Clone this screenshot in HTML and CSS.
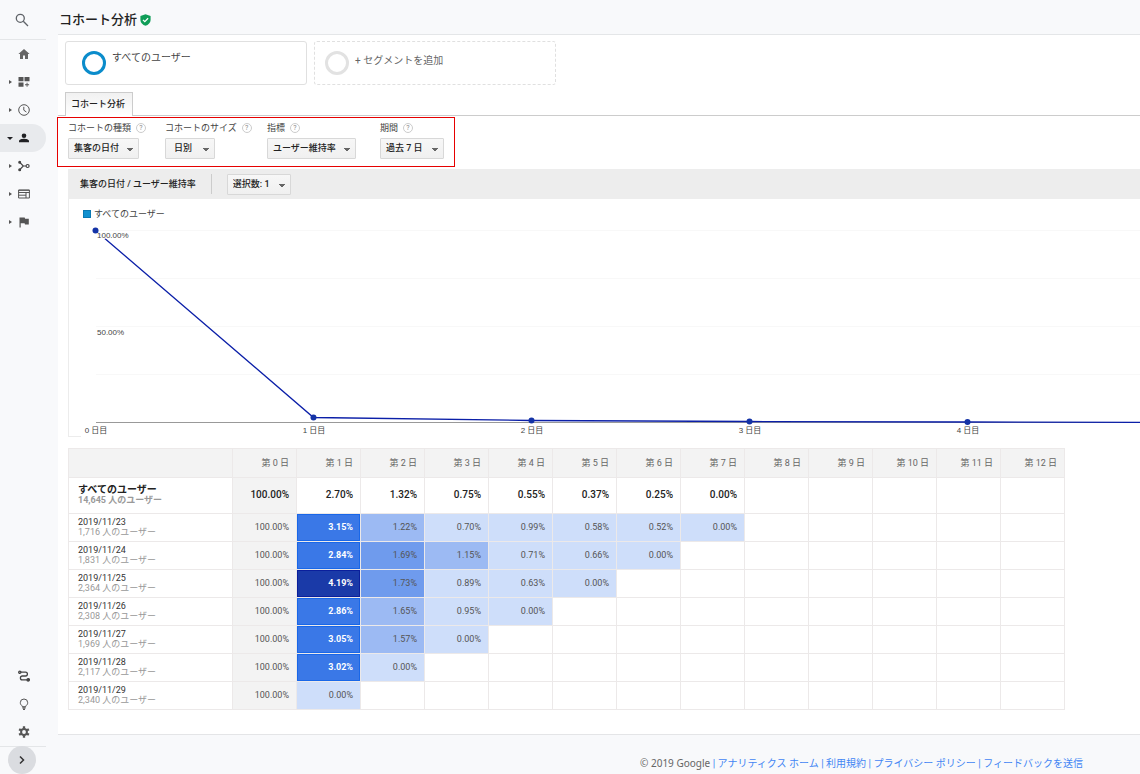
FILE: index.html
```html
<!DOCTYPE html>
<html lang="ja">
<head>
<meta charset="utf-8">
<title>コホート分析</title>
<link rel="stylesheet" href="styles.css">
</head>
<body>
<aside class="sidebar">
  <div class="side-search">
    <button class="icon-button" aria-label="検索"><svg width="14" height="14" viewBox="0 0 14 14" fill="none" stroke="#5f6368" stroke-width="1.3"><circle cx="5.3" cy="5.3" r="4"/><path d="M8.3 8.3 13 13"/></svg></button>
  </div>
  <nav class="side-nav">
    <a class="side-item" href="#" aria-label="ホーム"><svg class="icon" viewBox="0 0 12 12" fill="#666"><path d="M6 1 0.4 6H2v5h3V7.5h2V11h3V6h1.6z"/></svg></a>
    <a class="side-item has-caret" href="#" aria-label="カスタマイズ"><svg class="icon" viewBox="0 0 12 12" fill="#555"><path d="M.5 1h5v4.3h-5zM6.500 1h5v4.300h-5zM.5 6.500h5v4.300h-5zM8.600 6.700h.9v1.600h1.600v.9H9.500v1.600h-.9V9.200H7v-.9h1.600z"/></svg></a>
    <a class="side-item has-caret" href="#" aria-label="リアルタイム"><svg class="icon" viewBox="0 0 12 12" fill="none" stroke="#555"><circle cx="6" cy="6" r="5.3"/><path d="M5.800 2.800v3.400l2.600 1.800"/></svg></a>
    <a class="side-item has-caret active" href="#" aria-label="ユーザー"><svg class="icon" viewBox="0 0 12 12" fill="#202124"><circle cx="6" cy="3.700" r="2.300"/><path d="M1 10.300V9.200C1 7.500 4 6.800 6 6.800s5 .7 5 2.400v1.100z"/></svg></a>
    <a class="side-item has-caret" href="#" aria-label="集客"><svg class="icon" viewBox="0 0 12 12" fill="none" stroke="#444" stroke-width="1.200"><path d="M1.800 2.300 5.300 6 1.800 9.700M5.300 6H8"/><circle cx="9.600" cy="6" r="1.500"/><circle cx="1.700" cy="2.200" r=".9" fill="#444"/><circle cx="1.700" cy="9.800" r=".9" fill="#444"/></svg></a>
    <a class="side-item has-caret" href="#" aria-label="行動"><svg class="icon" viewBox="0 0 12 12" fill="none" stroke="#555"><path d="M.6 2h10.800v8H.6zM.6 4.500h10.800M8 4.500V10M.6 7.200H8"/><path d="M.6 2.300h10.800"/></svg></a>
    <a class="side-item has-caret" href="#" aria-label="コンバージョン"><svg class="icon" viewBox="0 0 12 12" fill="#555"><path d="M1.500 1.500h5.200l.4 1.300h3.700v5.700H7L6.600 7.200H2.700v4.300H1.500z"/></svg></a>
  </nav>
  <nav class="side-nav side-tools">
    <a class="side-item" href="#" aria-label="アトリビューション"><svg class="icon" viewBox="0 0 12 12" fill="none" stroke="#444" stroke-width="1.300"><circle cx="1.800" cy="2.200" r="1.100"/><path d="M3 2.200h4.500a1.900 1.900 0 0 1 0 3.800H4.300a1.900 1.900 0 0 0 0 3.800H9"/><circle cx="10.200" cy="9.800" r="1.200" fill="#444"/></svg></a>
    <a class="side-item" href="#" aria-label="発見"><svg class="icon" viewBox="0 0 12 12" fill="none" stroke="#555"><path d="M4.300 8.700V7.900C3 7.200 2.300 6.100 2.300 4.700a3.700 3.700 0 0 1 7.400 0c0 1.400-.7 2.500-2 3.200v.8z"/><path d="M4.300 9.800h3.400M5 11.300h2" stroke-width="1.200"/></svg></a>
    <a class="side-item" href="#" aria-label="管理"><svg class="icon" viewBox="0 0 12 12" fill="none" stroke="#555"><circle cx="6" cy="6" r="2.900" stroke-width="2"/><path d="M6 .3v2.200M6 9.500v2.200M1.100 3.200 3 4.300M9 7.700l1.900 1.100M1.100 8.800 3 7.700M9 4.300l1.900-1.100" stroke-width="2.300"/></svg></a>
  </nav>
  <div class="side-foot">
    <button class="expand" aria-label="メニューを開く"><svg width="10" height="10" viewBox="0 0 10 10" fill="none" stroke="#333" stroke-width="1.500"><path d="m3 1.500 3.500 3.500L3 8.500"/></svg></button>
  </div>
</aside>

<div class="page">
  <header class="page-header">
    <h1>コホート分析</h1>
    <svg width="11" height="12" viewBox="0 0 11 12"><path d="M5.500.2 10.600 2v4c0 2.700-2.300 4.900-5.100 5.800C2.700 10.900.4 8.700.4 6V2z" fill="#0f9d58"/><path d="m3 5.900 1.800 1.700 3.300-3.300" fill="none" stroke="#fff" stroke-width="1.300"/></svg>
  </header>

  <main class="content">
    <div class="segments">
      <button class="segment"><span class="ring"></span><span>すべてのユーザー</span></button>
      <button class="segment segment-add"><span class="ring"></span><span>+ セグメントを追加</span></button>
    </div>

    <div class="tabs"><button class="tab">コホート分析</button></div>

    <form class="controls">
      <div class="control">
        <label for="type">コホートの種類 <span class="help">?</span></label>
        <select id="type" class="pick pick-type"><option>集客の日付</option></select>
      </div>
      <div class="control">
        <label for="size">コホートのサイズ <span class="help">?</span></label>
        <select id="size" class="pick pick-size"><option>日別</option></select>
      </div>
      <div class="control">
        <label for="metric">指標 <span class="help">?</span></label>
        <select id="metric" class="pick pick-metric"><option>ユーザー維持率</option></select>
      </div>
      <div class="control">
        <label for="range">期間 <span class="help">?</span></label>
        <select id="range" class="pick pick-range"><option>過去 7 日</option></select>
      </div>
    </form>

    <section class="panel">
      <div class="panel-head">
        <h2>集客の日付 / ユーザー維持率</h2>
        <select class="pick pick-count" aria-label="選択数"><option>選択数: 1</option></select>
      </div>
      <div class="chart">
        <div class="legend"><span class="swatch"></span>すべてのユーザー</div>
        <svg class="plot" height="211">
          <g stroke="#f8f8f8"><path d="M27 4.500h3000M27 52.500h3000M27 100.500h3000M27 148.500h3000"/></g>
          <path d="M0 210.500h12" stroke="#ececec"/>
          <path d="M27 196.500h3000" stroke="#999"/>
          <path d="M26.500 4.500 244.500 191.500 462.500 194.500 680.500 195.500 898.500 196 1116.500 196.500" fill="none" stroke="#0b1fa8" stroke-width="1.300"/>
          <g fill="#1433a6"><circle cx="244.500" cy="191.500" r="3"/><circle cx="462.500" cy="194.500" r="3"/><circle cx="680.500" cy="195.500" r="3"/><circle cx="898.500" cy="196" r="3"/></g>
          <g class="y-label"><text x="28" y="12">100.00%</text><text x="28" y="109">50.00%</text></g>
          <circle cx="26.500" cy="4.500" r="3" fill="#1433a6"/>
          <g class="x-label"><text x="27" y="207">0 日目</text><text x="245" y="207">1 日目</text><text x="463" y="207">2 日目</text><text x="681" y="207">3 日目</text><text x="899" y="207">4 日目</text></g>
        </svg>
      </div>
    </section>

    <table class="cohort">
      <colgroup><col class="col-name"><col span="13"></colgroup>
      <thead><tr><th></th><th>第 0 日</th><th>第 1 日</th><th>第 2 日</th><th>第 3 日</th><th>第 4 日</th><th>第 5 日</th><th>第 6 日</th><th>第 7 日</th><th>第 8 日</th><th>第 9 日</th><th>第 10 日</th><th>第 11 日</th><th>第 12 日</th></tr></thead>
      <tbody>
        <tr class="total"><th>すべてのユーザー<small>14,645 人のユーザー</small></th><td class="base">100.00%</td><td>2.70%</td><td>1.32%</td><td>0.75%</td><td>0.55%</td><td>0.37%</td><td>0.25%</td><td>0.00%</td><td></td><td></td><td></td><td></td><td></td></tr>
        <tr><th>2019/11/23<small>1,716 人のユーザー</small></th><td class="base">100.00%</td><td class="l4">3.15%</td><td class="l2">1.22%</td><td class="l1">0.70%</td><td class="l1">0.99%</td><td class="l1">0.58%</td><td class="l1">0.52%</td><td class="l1">0.00%</td><td></td><td></td><td></td><td></td><td></td></tr>
        <tr><th>2019/11/24<small>1,831 人のユーザー</small></th><td class="base">100.00%</td><td class="l4">2.84%</td><td class="l3">1.69%</td><td class="l2">1.15%</td><td class="l1">0.71%</td><td class="l1">0.66%</td><td class="l1">0.00%</td><td></td><td></td><td></td><td></td><td></td><td></td></tr>
        <tr><th>2019/11/25<small>2,364 人のユーザー</small></th><td class="base">100.00%</td><td class="l5">4.19%</td><td class="l3">1.73%</td><td class="l1">0.89%</td><td class="l1">0.63%</td><td class="l1">0.00%</td><td></td><td></td><td></td><td></td><td></td><td></td><td></td></tr>
        <tr><th>2019/11/26<small>2,308 人のユーザー</small></th><td class="base">100.00%</td><td class="l4">2.86%</td><td class="l2">1.65%</td><td class="l1">0.95%</td><td class="l1">0.00%</td><td></td><td></td><td></td><td></td><td></td><td></td><td></td><td></td></tr>
        <tr><th>2019/11/27<small>1,969 人のユーザー</small></th><td class="base">100.00%</td><td class="l4">3.05%</td><td class="l2">1.57%</td><td class="l1">0.00%</td><td></td><td></td><td></td><td></td><td></td><td></td><td></td><td></td><td></td></tr>
        <tr><th>2019/11/28<small>2,117 人のユーザー</small></th><td class="base">100.00%</td><td class="l4">3.02%</td><td class="l1">0.00%</td><td></td><td></td><td></td><td></td><td></td><td></td><td></td><td></td><td></td><td></td></tr>
        <tr><th>2019/11/29<small>2,340 人のユーザー</small></th><td class="base">100.00%</td><td class="l1">0.00%</td><td></td><td></td><td></td><td></td><td></td><td></td><td></td><td></td><td></td><td></td><td></td></tr>
      </tbody>
    </table>
  </main>

  <footer class="page-footer">
    <span>© 2019 Google</span> | <a href="#">アナリティクス ホーム</a> | <a href="#">利用規約</a> | <a href="#">プライバシー ポリシー</a> | <a href="#">フィードバックを送信</a>
  </footer>
</div>
</body>
</html>
```
FILE: styles.css
```css
* { box-sizing: border-box; }

body {
  display: flex;
  min-height: 100vh;
  margin: 0;
  background: #f8f9fb;
  color: #222;
  font: 9px/12px Roboto, "Noto Sans CJK JP", sans-serif;
}

button, select { font: inherit; color: inherit; }
a { text-decoration: none; }

/* Sidebar */
.sidebar {
  display: flex;
  flex-direction: column;
  flex: none;
  width: 58px;
  height: 100vh;
  padding-right: 12px;
}
.side-search {
  display: flex;
  align-items: center;
  height: 40px;
  padding-left: 15px;
  border-bottom: 1px solid #e4e6e8;
}
.icon-button { display: flex; padding: 0; border: 0; background: none; }
.side-item {
  display: flex;
  align-items: center;
  height: 28px;
  padding-left: 18px;
}
.icon { width: 12px; height: 12px; }
.has-caret { padding-left: 9px; gap: 6px; }
.has-caret::before {
  content: "";
  border: solid transparent;
  border-width: 2px 0 2px 3px;
  border-left-color: #555;
}
.side-item.active { padding-left: 7px; gap: 5px; border-radius: 0 14px 14px 0; background: #e8eaed; }
.side-item.active::before {
  border-width: 3px 3px 0;
  border-color: #202124 transparent transparent;
}
.side-tools { margin-top: auto; }
.side-foot { height: 28px; padding-left: 8px; box-shadow: inset 0 1px #e4e6e8; }
.expand {
  display: flex;
  align-items: center;
  justify-content: center;
  width: 28px;
  height: 28px;
  padding: 0;
  border: 0;
  border-radius: 50%;
  background: #dadce0;
}

/* Page frame */
.page { display: flex; flex-direction: column; flex: 1; min-width: 0; }
.page-header {
  display: flex;
  align-items: center;
  gap: 3px;
  height: 35px;
  padding: 5px 1px 0;
  border-bottom: 1px solid #e4e6e8;
}
h1 { margin: 0; font-size: 13px; line-height: 20px; font-weight: 500; }
.content {
  flex: 1;
  min-width: 0;
  padding-top: 6px;
  border-bottom: 1px solid #e4e5e7;
  background: #fff;
}
.page-footer {
  height: 39px;
  padding: 20px 57px 0 0;
  color: #4285f4;
  font-size: 10px;
  line-height: 16px;
  text-align: right;
  white-space: nowrap;
}
.page-footer span { color: #666; font-family: "Noto Sans", sans-serif; }
.page-footer a { color: #4285f4; }

/* Segments */
.segments { display: flex; gap: 7px; padding-left: 7px; }
.segment {
  display: flex;
  gap: 6px;
  width: 242px;
  height: 44px;
  padding: 9px 16px;
  border: 1px solid #e0e0e0;
  border-radius: 3px;
  background: #fff;
  color: #444;
  font-size: 10px;
  line-height: 14px;
}
.ring {
  width: 24px;
  height: 24px;
  border: 3px solid #0b8ccb;
  border-radius: 50%;
}
.segment-add { align-items: center; padding: 0 10px; border-style: dashed; color: #666; }
.segment-add span:last-child { padding-bottom: 4px; }
.segment-add .ring { border-color: #e2e2e2; }

/* Tabs */
.tabs { margin-top: 7px; padding-left: 7px; box-shadow: inset 0 -1px #ccc; }
.tab {
  display: block;
  width: 68px;
  height: 24px;
  padding: 0 2px 2px 0;
  border: 1px solid #ccc;
  border-bottom: 0;
  background: linear-gradient(#f1f1f1, #fff);
  font-weight: 500;
}

/* Cohort controls */
.controls {
  display: grid;
  grid-template-columns: 97px 102px 113px auto;
  width: 398px;
  height: 50px;
  margin: 1px 0 2px -1px;
  padding-left: 10px;
  border: 1px solid #e60000;
}
.control label {
  display: flex;
  align-items: center;
  gap: 5px;
  height: 20px;
  color: #444;
  white-space: nowrap;
}
.help {
  width: 10px;
  height: 10px;
  border: 1px solid #ccc;
  border-radius: 50%;
  color: #888;
  font-size: 7px;
  line-height: 8px;
  text-align: center;
}
.pick {
  display: block;
  height: 21px;
  padding: 0 16px 1px 5px;
  appearance: none;
  border: 1px solid #d8d8d8;
  border-radius: 1px;
  background:
    conic-gradient(from 315deg at 50% 100%, #666 90deg, transparent 0) right 5px top 9px / 6px 3px no-repeat,
    linear-gradient(#f7f7f7, #f0f0f0);
  font-weight: 500;
}
.pick-type { width: 71px; }
.pick-size { width: 50px; padding-left: 8px; }
.pick-metric { width: 89px; }
.pick-range { width: 64px; }
.pick-count { width: 64px; }

/* Chart */
.panel { margin-left: 10px; }
.panel-head {
  display: flex;
  align-items: center;
  gap: 15px;
  height: 30px;
  padding-left: 12px;
  background: #ededed;
}
h2 {
  margin: 0;
  padding-right: 15px;
  border-right: 1px solid #ccc;
  font-size: 9px;
  line-height: 20px;
  font-weight: 500;
}
.chart { border-left: 1px solid #ececec; }
.legend {
  display: flex;
  align-items: center;
  gap: 3px;
  height: 27px;
  padding: 2px 0 0 14px;
  color: #444;
}
.swatch { width: 8px; height: 8px; border: 1px solid #0a79b3; background: #1191d0; }
.plot { display: block; width: 100%; }
.plot text { fill: #444; font-family: "Liberation Sans", "Noto Sans CJK JP", sans-serif; font-size: 8px; }
.x-label { text-anchor: middle; }
.y-label text { stroke: #fff; stroke-width: 2px; paint-order: stroke; }

/* Cohort table */
.cohort {
  width: 997px;
  margin: 11px 0 24px 10px;
  border-collapse: collapse;
  table-layout: fixed;
}
.col-name { width: 164px; }
.cohort th, .cohort td {
  height: 28px;
  padding: 0 7px 1px;
  border: 1px solid #ece9e9;
  color: #555;
  font-weight: 400;
  text-align: right;
}
.cohort thead th { height: 29px; background: #f3f3f3; color: #666; }
.cohort tbody th { padding: 0 9px 2px; color: #333; line-height: 10px; text-align: left; }
.cohort small { display: block; color: #999; font-size: 9px; }
.cohort .total th, .cohort .total td { height: 36px; color: #222; font-size: 10px; font-weight: 500; }
.cohort .total th { font-weight: 700; line-height: 11px; }
.cohort .base { background: #f3f3f3; }
.cohort .l1 { background: #cedefa; }
.cohort .l2 { background: #9cbaf3; }
.cohort .l3 { background: #6f9bed; }
.cohort .l4, .cohort .l5 { color: #fff; font-weight: 700; }
.cohort .l4 { background: #3a78e7; box-shadow: inset 0 0 0 1px #1967e8; }
.cohort .l5 { background: #1a3aa8; box-shadow: inset 0 0 0 1px #0a1f9c; }
```
